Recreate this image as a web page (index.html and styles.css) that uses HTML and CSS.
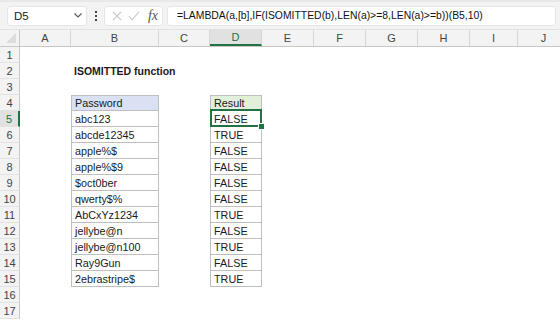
FILE: index.html
```html
<!DOCTYPE html>
<html lang="en">
<head>
    <meta charset="UTF-8">
    <title>ISOMITTED function</title>
    <link rel="stylesheet" href="styles.css">
</head>
<body>
    <div class="formula-bar">
        <div class="name-box">
            <span>D5</span>
            <svg class="chevron" width="8" height="5" viewBox="0 0 8 5"><path d="M0.5 0.5 L4 4 L7.5 0.5" fill="none" stroke="#555" stroke-width="1.1"/></svg>
        </div>
        <div class="dots"><i></i><i></i><i></i></div>
        <div class="fx-box">
            <svg width="12" height="12" viewBox="0 0 12 12"><path d="M1 1 L11 11 M11 1 L1 11" stroke="#c4c4c4" stroke-width="1.2"/></svg>
            <svg width="14" height="12" viewBox="0 0 14 12"><path d="M1 6 L5 10.5 L13 1" fill="none" stroke="#c4c4c4" stroke-width="1.2"/></svg>
            <span class="fx">fx</span>
        </div>
        <div class="formula">=LAMBDA(a,[b],IF(ISOMITTED(b),LEN(a)&gt;=8,LEN(a)&gt;=b))(B5,10)</div>
    </div>

    <div class="sheet">
        <div class="row col-head">
            <div class="corner"><svg width="10" height="10" viewBox="0 0 10 10"><path d="M10 0 L10 10 L0 10 Z" fill="#dcdcdc"/></svg></div>
            <div>A</div><div>B</div><div>C</div><div class="active">D</div><div>E</div>
            <div>F</div><div>G</div><div>H</div><div>I</div><div>J</div>
        </div>
        <div class="row"><div class="rh">1</div></div>
        <div class="row"><div class="rh">2</div><div class="cell b title">ISOMITTED function</div></div>
        <div class="row"><div class="rh">3</div></div>
        <div class="row"><div class="rh">4</div><div class="cell b box top pw-head">Password</div><div class="cell d box top res-head">Result</div></div>
        <div class="row"><div class="rh active">5</div><div class="cell b box">abc123</div><div class="cell d box selected">FALSE</div></div>
        <div class="row"><div class="rh">6</div><div class="cell b box">abcde12345</div><div class="cell d box">TRUE</div></div>
        <div class="row"><div class="rh">7</div><div class="cell b box">apple%$</div><div class="cell d box">FALSE</div></div>
        <div class="row"><div class="rh">8</div><div class="cell b box">apple%$9</div><div class="cell d box">FALSE</div></div>
        <div class="row"><div class="rh">9</div><div class="cell b box">$oct0ber</div><div class="cell d box">FALSE</div></div>
        <div class="row"><div class="rh">10</div><div class="cell b box">qwerty$%</div><div class="cell d box">FALSE</div></div>
        <div class="row"><div class="rh">11</div><div class="cell b box">AbCxYz1234</div><div class="cell d box">TRUE</div></div>
        <div class="row"><div class="rh">12</div><div class="cell b box">jellybe@n</div><div class="cell d box">FALSE</div></div>
        <div class="row"><div class="rh">13</div><div class="cell b box">jellybe@n100</div><div class="cell d box">TRUE</div></div>
        <div class="row"><div class="rh">14</div><div class="cell b box">Ray9Gun</div><div class="cell d box">FALSE</div></div>
        <div class="row"><div class="rh">15</div><div class="cell b box">2ebrastripe$</div><div class="cell d box">TRUE</div></div>
        <div class="row"><div class="rh">16</div></div>
        <div class="row"><div class="rh">17</div></div>
    </div>
</body>
</html>
```

FILE: styles.css
```css
:root {
    --bar-bg: #f3f3f3;
    --head-bg: #f3f3f3;
    --head-text: #444444;
    --head-line: #d6d6d6;
    --table-line: #bfbfbf;
    --excel-green: #217346;
}

body {
    margin: 0;
    width: 560px;
    height: 320px;
    overflow: hidden;
    background: #ffffff;
    font-family: 'Liberation Sans', Arial, sans-serif;
    font-size: 11px;
    color: #000000;
}

/* formula bar */

.formula-bar {
    display: flex;
    align-items: center;
    height: 30px;
    padding: 0 4px 0 7px;
    background: var(--bar-bg);
    border-top: 2px solid #e8e8e8;
    border-bottom: 1px solid #e2e2e2;
    box-sizing: border-box;
}

.name-box,
.fx-box,
.formula {
    height: 20px;
    background: #ffffff;
    border-radius: 3px;
    border: 1px solid #e6e6e6;
    box-sizing: border-box;
    display: flex;
    align-items: center;
}

.name-box {
    width: 80px;
    padding: 0 4px 0 6px;
    justify-content: space-between;
    font-size: 11.5px;
    color: #222;
}

.dots {
    width: 17px;
    display: flex;
    flex-direction: column;
    align-items: center;
    gap: 2px;
}

.dots i {
    width: 2px;
    height: 2px;
    background: #444;
}

.fx-box {
    width: 59px;
    padding: 0 4px 0 7px;
    gap: 6px;
}

.fx {
    font-family: 'Liberation Serif', 'Times New Roman', serif;
    font-style: italic;
    font-size: 14px;
    color: #555;
    margin-left: 2px;
}

.formula {
    flex: 1;
    margin-left: 4px;
    padding-left: 9px;
    font-size: 10.4px;
    color: #111;
    white-space: nowrap;
    overflow: hidden;
}

/* sheet grid */

.row {
    display: grid;
    grid-template-columns: 20px 51px 88px 51px 52px 52px 52px 52px 52px 48px 52px;
    height: 16px;
}

.col-head {
    height: 17px;
    background: var(--head-bg);
    border-bottom: 1px solid #c8c8c8;
    box-sizing: border-box;
}

.col-head div {
    display: flex;
    align-items: center;
    justify-content: center;
    color: var(--head-text);
    border-right: 1px solid var(--head-line);
}

.col-head .corner {
    justify-content: flex-end;
    align-items: flex-end;
    padding: 0 3px 3px 0;
    border-right: 1px solid #c8c8c8;
}

.col-head .active {
    background: #e1e1e1;
    color: var(--excel-green);
    border-bottom: 2px solid var(--excel-green);
}

.rh {
    grid-column: 1;
    background: var(--head-bg);
    color: var(--head-text);
    border-right: 1px solid #c8c8c8;
    border-bottom: 1px solid #e2e2e2;
    display: flex;
    align-items: center;
    justify-content: center;
    box-sizing: border-box;
}

.rh.active {
    background: #e1e1e1;
    color: var(--excel-green);
    border-right: 2px solid var(--excel-green);
}

.cell {
    display: flex;
    align-items: center;
    padding-left: 3px;
    font-size: 10.8px;
    white-space: nowrap;
    box-sizing: border-box;
    color: #1a1a1a;
}

.b { grid-column: 3; }
.d { grid-column: 5; }

.title {
    font-weight: bold;
    font-size: 10.5px;
    overflow: visible;
}

.box {
    border-left: 1px solid var(--table-line);
    border-right: 1px solid var(--table-line);
    border-bottom: 1px solid var(--table-line);
}

.box.top {
    border-top: 1px solid var(--table-line);
}

.pw-head { background: #d9e1f2; }
.res-head { background: #e2efda; }

.selected {
    position: relative;
}

.selected::before {
    content: "";
    position: absolute;
    left: -1px;
    top: -2px;
    right: -1px;
    bottom: -1px;
    border: 2px solid var(--excel-green);
}

.selected::after {
    content: "";
    position: absolute;
    right: -4px;
    bottom: -4px;
    width: 5px;
    height: 5px;
    background: var(--excel-green);
    border: 1px solid #ffffff;
}
```
